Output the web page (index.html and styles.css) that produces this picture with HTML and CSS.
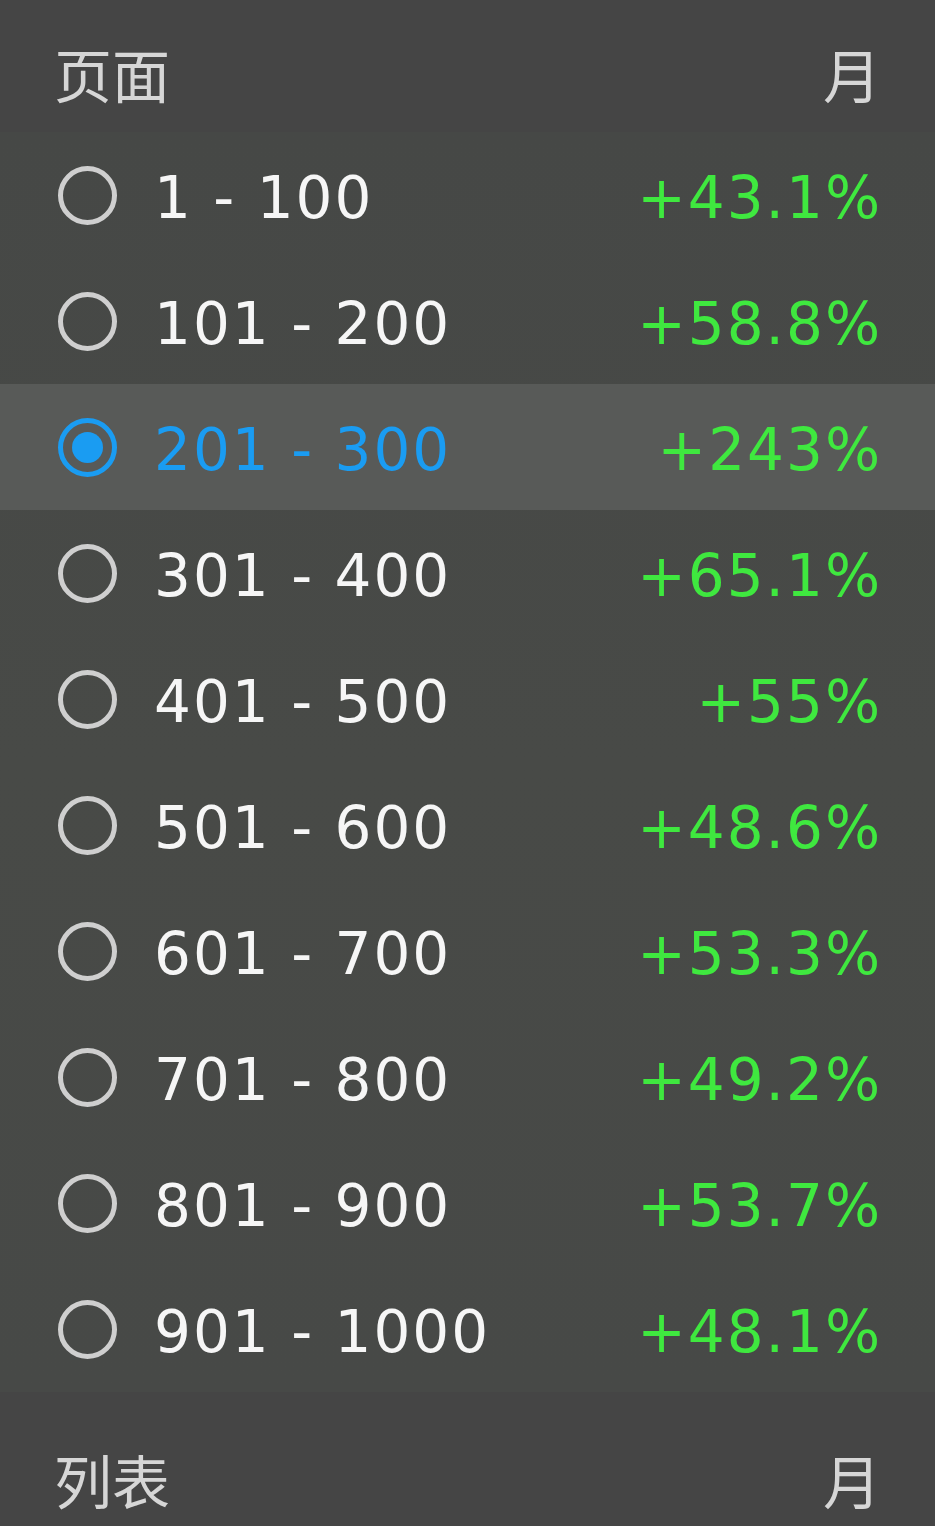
FILE: index.html
```html
<!DOCTYPE html>
<html lang="zh">
<head>
    <meta charset="UTF-8">
    <title>页面</title>
    <link rel="stylesheet" href="styles.css">
</head>
<body>

    <!-- Abschnitt: Seiten -->
    <div class="section-head">
        <span>页面</span>
        <span>月</span>
    </div>

    <div class="list">
        <div class="row"><span class="radio"></span><span class="range">1 - 100</span><span class="pct">+43.1%</span></div>
        <div class="row"><span class="radio"></span><span class="range">101 - 200</span><span class="pct">+58.8%</span></div>
        <div class="row selected"><span class="radio"></span><span class="range">201 - 300</span><span class="pct">+243%</span></div>
        <div class="row"><span class="radio"></span><span class="range">301 - 400</span><span class="pct">+65.1%</span></div>
        <div class="row"><span class="radio"></span><span class="range">401 - 500</span><span class="pct">+55%</span></div>
        <div class="row"><span class="radio"></span><span class="range">501 - 600</span><span class="pct">+48.6%</span></div>
        <div class="row"><span class="radio"></span><span class="range">601 - 700</span><span class="pct">+53.3%</span></div>
        <div class="row"><span class="radio"></span><span class="range">701 - 800</span><span class="pct">+49.2%</span></div>
        <div class="row"><span class="radio"></span><span class="range">801 - 900</span><span class="pct">+53.7%</span></div>
        <div class="row"><span class="radio"></span><span class="range">901 - 1000</span><span class="pct">+48.1%</span></div>
    </div>

    <!-- Abschnitt: Liste -->
    <div class="section-head second">
        <span>列表</span>
        <span>月</span>
    </div>

</body>
</html>
```

FILE: styles.css
```css
body {
    margin: 0;
    padding: 0;
    background-color: #454545;
    font-family: "DejaVu Sans", Verdana, sans-serif;
    overflow: hidden;
}

/* Kopfzeile */
.section-head {
    display: flex;
    justify-content: space-between;
    padding: 45px 54px 31px 54px;
    line-height: 56px;
    font-size: 58px;
    font-family: "Noto Sans CJK SC", sans-serif;
    font-weight: 400;
    color: #d6d6d6;
}

.section-head.second {
    padding-top: 59px;
}

/* Liste */
.list {
    background: linear-gradient(180deg, #464846 0%, #484a47 50%, #474947 100%);
}

.row {
    display: flex;
    align-items: center;
    height: 126px;
    padding: 0 55px 0 58px;
    font-size: 58px;
    letter-spacing: 2px;
    color: #f6f6f6;
}

.range,
.pct {
    padding-top: 5px;
}

.radio {
    width: 59px;
    height: 59px;
    box-sizing: border-box;
    border: 5px solid #cfcfcf;
    border-radius: 50%;
    margin-right: 37px;
    flex-shrink: 0;
    position: relative;
}

.pct {
    margin-left: auto;
    margin-right: -2px;
    color: #3fe83f;
}

/* Ausgewählte Zeile */
.row.selected {
    background-color: #585a58;
    color: #1a9cf2;
}

.row.selected .radio {
    border-color: #1a9cf2;
}

.row.selected .radio::after {
    content: "";
    position: absolute;
    top: 9px;
    left: 9px;
    width: 31px;
    height: 31px;
    border-radius: 50%;
    background-color: #1a9cf2;
}
```
